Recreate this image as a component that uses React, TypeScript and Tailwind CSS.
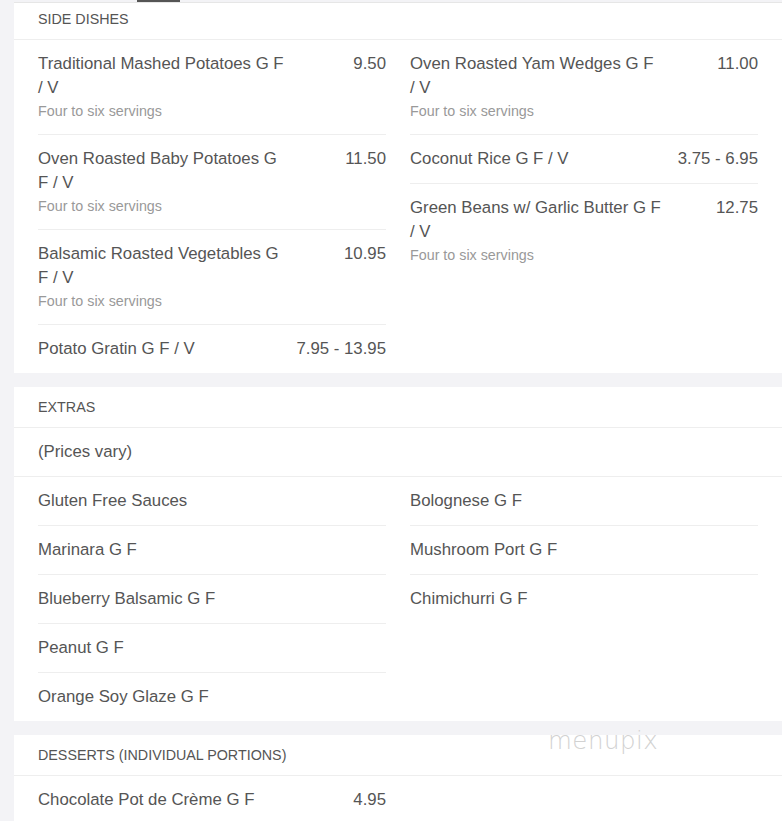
type Dish = { name: string; price?: string; desc?: string };

const sideLeft: Dish[] = [
  { name: "Traditional Mashed Potatoes G F / V", price: "9.50", desc: "Four to six servings" },
  { name: "Oven Roasted Baby Potatoes G F / V", price: "11.50", desc: "Four to six servings" },
  { name: "Balsamic Roasted Vegetables G F / V", price: "10.95", desc: "Four to six servings" },
  { name: "Potato Gratin G F / V", price: "7.95 - 13.95" },
];

const sideRight: Dish[] = [
  { name: "Oven Roasted Yam Wedges G F / V", price: "11.00", desc: "Four to six servings" },
  { name: "Coconut Rice G F / V", price: "3.75 - 6.95" },
  { name: "Green Beans w/ Garlic Butter G F / V", price: "12.75", desc: "Four to six servings" },
];

const extrasLeft: Dish[] = [
  { name: "Gluten Free Sauces" },
  { name: "Marinara G F" },
  { name: "Blueberry Balsamic G F" },
  { name: "Peanut G F" },
  { name: "Orange Soy Glaze G F" },
];

const extrasRight: Dish[] = [
  { name: "Bolognese G F" },
  { name: "Mushroom Port G F" },
  { name: "Chimichurri G F" },
];

function Item({ d }: { d: Dish }) {
  return (
    <div className="py-3 border-t border-[#eeeeee] first:border-t-0">
      <div className="flex">
        <div className="flex-1 min-w-0 text-[16.8px] leading-6 text-[#555]">{d.name}</div>
        {d.price && <div className="w-[96px] shrink-0 text-right text-[16.8px] leading-6 text-[#555]">{d.price}</div>}
      </div>
      {d.desc && <div className="text-[14.3px] leading-[22px] text-[#999]">{d.desc}</div>}
    </div>
  );
}

function Column({ items }: { items: Dish[] }) {
  return (
    <div className="flex flex-col">
      {items.map((d) => (
        <Item key={d.name} d={d} />
      ))}
    </div>
  );
}

function Header({ title, top = "pt-[10px]" }: { title: string; top?: string }) {
  return (
    <div className={`px-6 ${top} pb-[10px] border-b border-[#eeeeee] text-[14.3px] leading-5 uppercase text-[#555]`}>
      {title}
    </div>
  );
}

export default function App() {
  return (
    <div
      className="min-h-screen bg-[#f3f3f6] pl-[14px] pb-6 relative overflow-hidden"
      style={{ fontFamily: '"Liberation Sans", Arial, sans-serif' }}
    >
      {/* tab indicator from above */}
      <div className="h-[2px] flex">
        <div className="ml-[123px] w-[43px] bg-[#555]" />
      </div>

      <div className="flex flex-col gap-[14px]">
        {/* side dishes */}
        <div className="bg-white border-t border-[#e6e6e6]">
          <Header title="Side Dishes" top="pt-[6px]" />
          <div className="px-6 grid grid-cols-2 gap-x-6">
            <Column items={sideLeft} />
            <Column items={sideRight} />
          </div>
        </div>

        {/* extras */}
        <div className="bg-white">
          <Header title="Extras" />
          <div className="px-6 py-3 border-b border-[#eeeeee] text-[16.8px] leading-6 text-[#555]">(Prices vary)</div>
          <div className="px-6 grid grid-cols-2 gap-x-6">
            <Column items={extrasLeft} />
            <Column items={extrasRight} />
          </div>
        </div>

        {/* desserts */}
        <div className="bg-white">
          <Header title="Desserts (Individual Portions)" />
          <div className="px-6 grid grid-cols-2 gap-x-6">
            <Column items={[{ name: "Chocolate Pot de Crème G F", price: "4.95" }]} />
            <div />
          </div>
        </div>
      </div>

      {/* watermark */}
      <div
        className="absolute left-[548px] top-[723px] text-[24.5px] font-extralight tracking-[0.5px] text-[#d2d2d2] select-none pointer-events-none"
        style={{ fontFamily: '"DejaVu Sans", sans-serif' }}
      >
        menupix
      </div>
    </div>
  );
}
